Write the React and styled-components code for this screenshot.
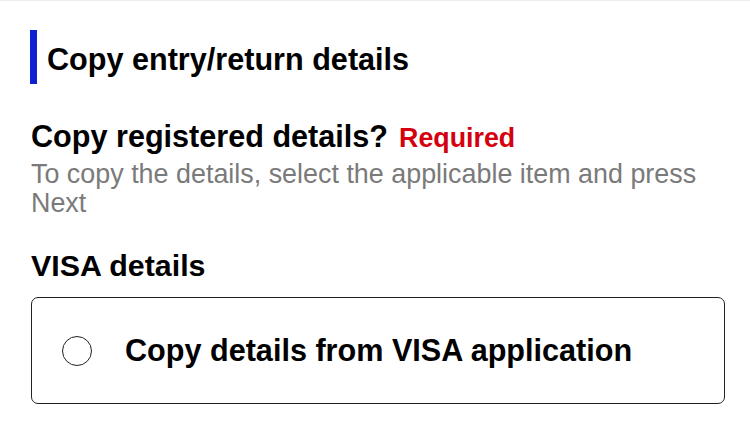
import React from "react";
import styled, { createGlobalStyle } from "styled-components";

const GlobalStyle = createGlobalStyle`
  html, body {
    margin: 0;
    padding: 0;
    background: #ffffff;
  }
  body {
    font-family: "Liberation Sans", Arial, Helvetica, sans-serif;
    color: #000;
  }
`;

const Page = styled.div`
  width: 750px;
  height: 422px;
  box-sizing: border-box;
  border-top: 1px solid #ececec;
  padding: 29px 25px 0 31px;
  overflow: hidden;
`;

const SectionHeader = styled.div`
  display: flex;
  align-items: flex-start;
  margin-left: -1px;
`;

const Accent = styled.div`
  width: 7px;
  height: 54px;
  background: #0f1fd2;
  flex-shrink: 0;
`;

const SectionTitle = styled.h2`
  margin: 0 0 0 10px;
  padding-top: 2px;
  font-size: 30.6px;
  line-height: 54px;
  font-weight: 700;
`;

const Question = styled.div`
  margin-top: 33px;
  font-size: 30.6px;
  line-height: 34px;
  font-weight: 700;
  white-space: nowrap;
`;

const RequiredTag = styled.span`
  color: #d4000f;
  font-size: 26.8px;
  margin-left: 11px;
`;

const Hint = styled.p`
  margin: 5px 0 0;
  font-size: 26.9px;
  line-height: 29px;
  color: #7a7a7a;
  white-space: nowrap;
`;

const GroupLabel = styled.div`
  margin-top: 30px;
  font-size: 30.4px;
  line-height: 34px;
  font-weight: 700;
`;

const Option = styled.label`
  margin-top: 15px;
  width: 694px;
  height: 107px;
  box-sizing: border-box;
  border: 1.5px solid #222;
  border-radius: 7px;
  display: flex;
  align-items: center;
  gap: 33px;
  padding-left: 30px;
  cursor: pointer;
`;

const Radio = styled.span`
  width: 30px;
  height: 30px;
  box-sizing: border-box;
  border: 1.5px solid #222;
  border-radius: 50%;
  flex-shrink: 0;
  background: ${(p) => (p.checked ? "#0f1fd2" : "#fff")};
`;

const OptionText = styled.span`
  font-size: 30.6px;
  font-weight: 700;
  white-space: nowrap;
`;

export default function App() {
  const [checked, setChecked] = React.useState(false);
  return (
    <Page>
      <GlobalStyle />
      <SectionHeader>
        <Accent />
        <SectionTitle>Copy entry/return details</SectionTitle>
      </SectionHeader>
      <Question>
        Copy registered details?<RequiredTag>Required</RequiredTag>
      </Question>
      <Hint>
        To copy the details, select the applicable item and press
        <br />
        Next
      </Hint>
      <GroupLabel>VISA details</GroupLabel>
      <Option onClick={() => setChecked(!checked)}>
        <Radio checked={checked} />
        <OptionText>Copy details from VISA application</OptionText>
      </Option>
    </Page>
  );
}
